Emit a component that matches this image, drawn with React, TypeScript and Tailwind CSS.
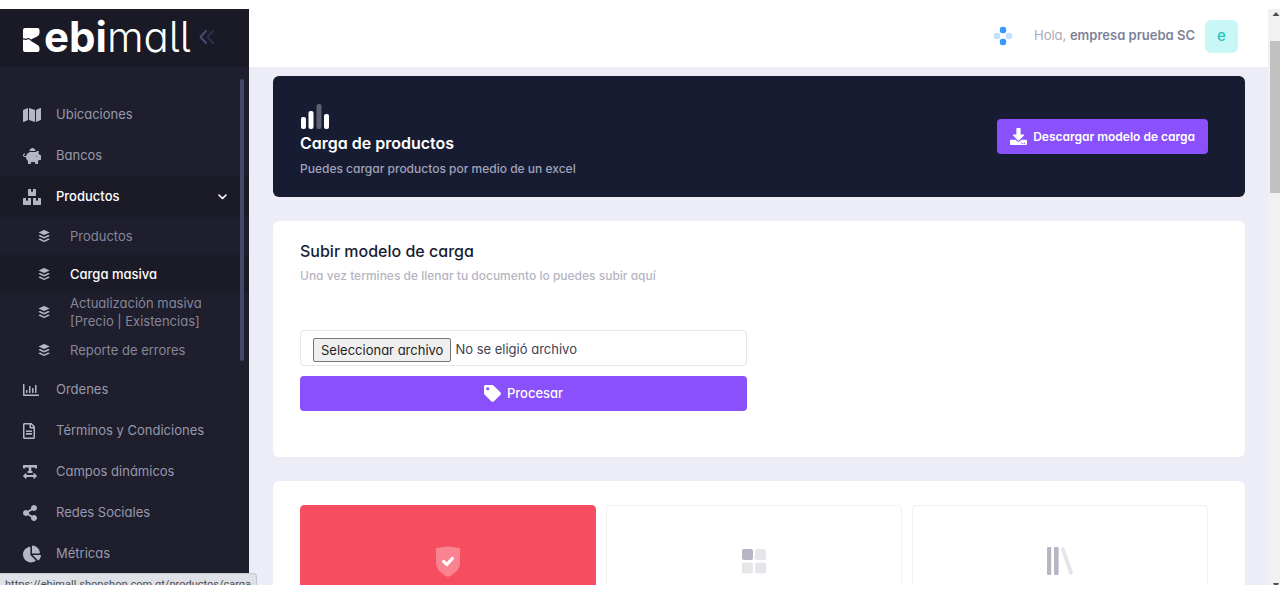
import type { ReactNode } from "react";
import type { IconType } from "react-icons";
import {
  FaBoxes,
  FaBuffer,
  FaChartPie,
  FaDownload,
  FaMap,
  FaPiggyBank,
  FaRegChartBar,
  FaRegFileAlt,
  FaShareAlt,
  FaTag,
  FaTextWidth,
} from "react-icons/fa";
import { clsx } from "clsx";

type MenuItem = {
  name: string;
  icon: IconType;
  wide?: boolean;
  children?: { name: string; active?: boolean }[];
};

const MENU: MenuItem[] = [
  { name: "Ubicaciones", icon: FaMap, wide: true },
  { name: "Bancos", icon: FaPiggyBank, wide: true },
  {
    name: "Productos",
    icon: FaBoxes,
    wide: true,
    children: [
      { name: "Productos" },
      { name: "Carga masiva", active: true },
      { name: "Actualización masiva [Precio | Existencias]" },
      { name: "Reporte de errores" },
    ],
  },
  { name: "Ordenes", icon: FaRegChartBar },
  { name: "Términos y Condiciones", icon: FaRegFileAlt },
  { name: "Campos dinámicos", icon: FaTextWidth },
  { name: "Redes Sociales", icon: FaShareAlt },
  { name: "Métricas", icon: FaChartPie, wide: true },
];

const Logo = () => (
  <a href="#" aria-label="ebimall" className="flex items-baseline text-white">
    <svg width="17" height="24" viewBox="0 0 17 24" fill="currentColor">
      <path d="M2 0H14.5A2 2 0 0 1 16.5 2V5C16.5 7 14.5 8.5 12 9.5L8 11.5 5.5 9.8 3.5 10.8 0 10.2V2A2 2 0 0 1 2 0Z" />
      <path d="M0 11.5L3.5 12 5.5 11 8.5 13.2 14.5 17C16 18 16.5 19 16.5 20.5V22A2 2 0 0 1 14.5 24H2A2 2 0 0 1 0 22Z" />
    </svg>
    <span className="ml-1 text-[42px] leading-[48px] font-light [font-feature-settings:'cv11','cv05']">
      <span className="font-bold">ebi</span>mall
    </span>
  </a>
);

const Sidebar = () => (
  <aside className="relative flex w-[249px] shrink-0 flex-col bg-[#1e1e2d]">
    <div className="flex h-[58px] shrink-0 items-center bg-[#1a1a27] pb-0.5 pl-[23px]">
      <Logo />
      <button aria-label="Contraer menú" className="ml-2">
        <svg
          width="16"
          height="16"
          viewBox="0 0 16 16"
          fill="none"
          strokeWidth="2"
          strokeLinecap="round"
          strokeLinejoin="round"
        >
          <path d="M7 2L1.5 8 7 14" stroke="#494b74" />
          <path d="M14 2L8.5 8 14 14" stroke="#2d2f4a" />
        </svg>
      </button>
    </div>
    <nav className="pt-[27px] text-[13px] text-[#9899ac]">
      <ul>
        {MENU.map((item) => (
          <li key={item.name}>
            <a
              href="#"
              className={clsx(
                "flex h-[41px] items-center pr-[22px] pl-[23px]",
                item.children && "bg-[#1b1b28] font-medium text-white",
              )}
            >
              <span className="w-[33px] text-[#b5b5c3]">
                <item.icon
                  size={item.wide ? 18 : 16}
                  preserveAspectRatio="xMinYMid meet"
                />
              </span>
              <span className="flex-1">{item.name}</span>
              {item.children && (
                <svg
                  width="9"
                  height="6"
                  viewBox="0 0 9 6"
                  fill="none"
                  stroke="currentColor"
                  strokeWidth="1.6"
                  strokeLinecap="round"
                  strokeLinejoin="round"
                >
                  <path d="M1 1L4.5 4.5 8 1" />
                </svg>
              )}
            </a>
            {item.children && (
              <ul>
                {item.children.map((child) => (
                  <li key={child.name}>
                    <a
                      href="#"
                      className={clsx(
                        "flex h-[38px] items-center pr-10 pl-[38px] leading-[18px]",
                        child.active
                          ? "bg-[#1b1b28] font-medium text-white"
                          : "text-[#868799]",
                      )}
                    >
                      <span className="w-8 shrink-0 text-[#b5b5c3]">
                        <FaBuffer
                          size={14}
                          preserveAspectRatio="xMinYMid meet"
                        />
                      </span>
                      {child.name}
                    </a>
                  </li>
                ))}
              </ul>
            )}
          </li>
        ))}
      </ul>
    </nav>
    {/* menu scroll thumb */}
    <div className="absolute top-[70px] right-[5px] h-[282px] w-1 rounded-full bg-[#434868]" />
  </aside>
);

const Topbar = () => (
  <header className="flex h-[58px] shrink-0 items-center justify-end bg-white pr-[30px] pb-1">
    <button aria-label="Accesos" className="mr-[21px]">
      <svg width="20" height="20" viewBox="0 0 20 20" fill="#3699ff">
        <rect x="6.8" y="0.8" width="6.4" height="6.4" rx="2.6" />
        <rect x="6.8" y="12.8" width="6.4" height="6.4" rx="2.6" />
        <rect x="0.8" y="6.8" width="6.4" height="6.4" rx="2.6" opacity="0.3" />
        <rect x="12.8" y="6.8" width="6.4" height="6.4" rx="2.6" opacity="0.3" />
      </svg>
    </button>
    <span className="text-[13px] text-[#a9aabb]">
      Hola, <span className="font-semibold text-[#7e8299]">empresa prueba SC</span>
    </span>
    <span className="ml-[10px] flex size-[33px] items-center justify-center rounded-md bg-[#c9f7f5] text-[15px] font-medium text-[#1bc5bd]">
      e
    </span>
  </header>
);

const Banner = () => (
  <section className="flex items-center justify-between rounded-md bg-[#181c32] py-5 pr-[37px] pl-[27px]">
    <div>
      <svg width="30" height="34" viewBox="0 0 30 34" fill="#fff">
        <rect x="1" y="21" width="5" height="12" rx="2" />
        <rect x="8.5" y="15" width="5" height="18" rx="2" />
        <rect x="16.5" y="8" width="5" height="25" rx="2" opacity="0.3" />
        <rect x="24" y="18" width="5" height="15" rx="2" />
      </svg>
      <h1 className="text-base leading-[26px] font-semibold text-white">
        Carga de productos
      </h1>
      <p className="mt-1 text-[12px] leading-[17px] font-medium text-[#a1a3ba]">
        Puedes cargar productos por medio de un excel
      </p>
    </div>
    <button className="flex h-[35px] items-center gap-1.5 rounded bg-[#8950fc] px-[13px] text-[12px] font-semibold text-white">
      <FaDownload size={17} />
      Descargar modelo de carga
    </button>
  </section>
);

const UploadCard = () => (
  <section className="rounded-md bg-white pt-[18px] pr-[37px] pb-[46px] pl-[27px]">
    <h2 className="text-base leading-6 font-medium text-[#181c32]">
      Subir modelo de carga
    </h2>
    <p className="mt-1 text-[12px] leading-[17px] font-medium text-[#b5b5c3]">
      Una vez termines de llenar tu documento lo puedes subir aquí
    </p>
    <form className="mt-[46px] grid grid-cols-2 gap-x-3.5">
      <div className="flex flex-col gap-2.5">
        <div className="flex h-9 items-center gap-1 rounded border border-[#e4e6ef] px-3 pt-1 text-[13px] text-[#3f4254]">
          <input id="archivo" type="file" className="peer sr-only" />
          <label
            htmlFor="archivo"
            className="rounded-xs border border-[#767676] bg-[#efefef] px-[7px] leading-[22px] text-[#1f1f1f] peer-focus-visible:outline-2"
          >
            Seleccionar archivo
          </label>
          <span>No se eligió archivo</span>
        </div>
        <button
          type="button"
          className="flex h-[35px] items-center justify-center gap-1.5 rounded bg-[#8950fc] text-[13px] font-medium text-white"
        >
          <FaTag size={17} />
          Procesar
        </button>
      </div>
    </form>
  </section>
);

const Tile = ({
  label,
  active,
  children,
}: {
  label: string;
  active?: boolean;
  children: ReactNode;
}) => (
  <button
    aria-label={label}
    className={clsx(
      "flex h-[140px] justify-center rounded border pt-[38px]",
      active ? "border-[#f64e60] bg-[#f64e60]" : "border-[#f0f0f5] bg-white",
    )}
  >
    {children}
  </button>
);

const Tiles = () => (
  <section className="shrink-0 rounded-t-md bg-white pt-6 pr-[37px] pl-[27px]">
    <div className="grid grid-cols-3 gap-2.5">
      <Tile label="Seguridad" active>
        <svg width="36" height="36" viewBox="0 0 36 36" fill="none">
          <path
            d="M6 4C10 3.3 14 2.8 18 2.4 22 2.8 26 3.3 30 4V19C30 25 25 29.5 18 33 11 29.5 6 25 6 19Z"
            fill="#fff"
            opacity="0.3"
          />
          <path
            d="M13.6 17.5L17 20.5 22.3 14.5"
            stroke="#fff"
            strokeWidth="3.2"
            strokeLinecap="round"
            strokeLinejoin="round"
          />
        </svg>
      </Tile>
      <Tile label="Categorías">
        <svg width="36" height="36" viewBox="0 0 36 36" fill="#b5b5c3">
          <rect x="6" y="5" width="11" height="11" rx="2" />
          <rect x="19" y="5" width="11" height="11" rx="2" opacity="0.35" />
          <rect x="6" y="18.5" width="11" height="11" rx="2" opacity="0.35" />
          <rect x="19" y="18.5" width="11" height="11" rx="2" opacity="0.35" />
        </svg>
      </Tile>
      <Tile label="Biblioteca">
        <svg width="36" height="36" viewBox="0 0 36 36" fill="#b5b5c3">
          <rect x="5" y="3" width="4.2" height="28" rx="1.2" />
          <rect x="12" y="3" width="4.6" height="28" rx="1.2" />
          <path
            d="M21 5.5L29 29"
            stroke="#b5b5c3"
            strokeWidth="3.8"
            strokeLinecap="round"
            opacity="0.35"
          />
        </svg>
      </Tile>
    </div>
  </section>
);

const PageScrollbar = () => (
  <div className="flex w-3 shrink-0 flex-col items-end justify-between overflow-hidden bg-[#f1f1f1]">
    <svg width="8" height="10" viewBox="0 0 8 10" fill="#505050">
      <path d="M0.5 7L4 3 7.5 7Z" />
    </svg>
    <div className="mt-[22px] mb-auto h-[152px] w-2.5 bg-[#c1c1c1]" />
    <svg width="8" height="2" viewBox="0 0 8 2" fill="#505050">
      <path d="M1 0H7L6 2H2Z" />
    </svg>
  </div>
);

const App = () => {
  return (
    <div className="h-screen bg-white pt-[9px] pb-1 font-['Inter','Liberation_Sans',sans-serif] [font-feature-settings:'cv11']">
      <div className="relative flex h-full overflow-hidden">
        <Sidebar />
        <div className="flex min-w-0 flex-1 flex-col bg-[#ecedf6]">
          <Topbar />
          <main className="flex flex-col gap-6 pt-[9px] pr-[23px] pl-6">
            <Banner />
            <UploadCard />
            <Tiles />
          </main>
        </div>
        <PageScrollbar />
        {/* link preview of the browser */}
        <div className="absolute bottom-0 left-0 h-3 overflow-hidden rounded-tr border-t border-r border-[#c4c7cc] bg-[#dee1e6] px-[5px] font-['Roboto',sans-serif] text-[11px] leading-[22px] text-[#4a4d52]">
          https://ebimall.shopshop.com.gt/productos/carga
        </div>
      </div>
    </div>
  );
};
export default App;
